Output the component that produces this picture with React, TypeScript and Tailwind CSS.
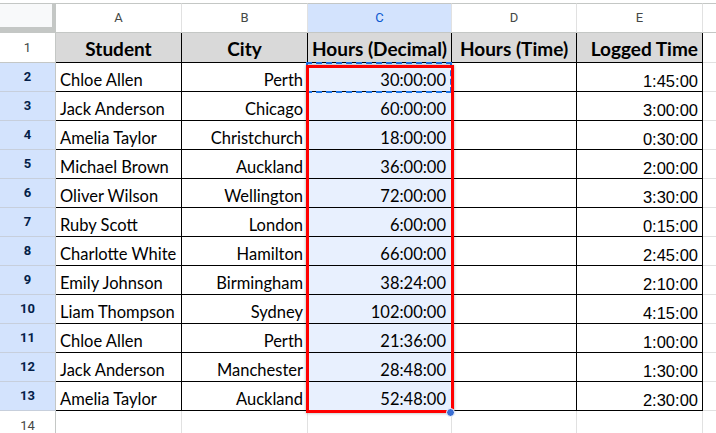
import React from 'react';

interface Entry {
    student: string;
    city: string;
    decimal: string;
    logged: string;
}

const entries: Entry[] = [
    { student: 'Chloe Allen', city: 'Perth', decimal: '30:00:00', logged: '1:45:00' },
    { student: 'Jack Anderson', city: 'Chicago', decimal: '60:00:00', logged: '3:00:00' },
    { student: 'Amelia Taylor', city: 'Christchurch', decimal: '18:00:00', logged: '0:30:00' },
    { student: 'Michael Brown', city: 'Auckland', decimal: '36:00:00', logged: '2:00:00' },
    { student: 'Oliver Wilson', city: 'Wellington', decimal: '72:00:00', logged: '3:30:00' },
    { student: 'Ruby Scott', city: 'London', decimal: '6:00:00', logged: '0:15:00' },
    { student: 'Charlotte White', city: 'Hamilton', decimal: '66:00:00', logged: '2:45:00' },
    { student: 'Emily Johnson', city: 'Birmingham', decimal: '38:24:00', logged: '2:10:00' },
    { student: 'Liam Thompson', city: 'Sydney', decimal: '102:00:00', logged: '4:15:00' },
    { student: 'Chloe Allen', city: 'Perth', decimal: '21:36:00', logged: '1:00:00' },
    { student: 'Jack Anderson', city: 'Manchester', decimal: '28:48:00', logged: '1:30:00' },
    { student: 'Amelia Taylor', city: 'Auckland', decimal: '52:48:00', logged: '2:30:00' },
];

const letters = ['A', 'B', 'C', 'D', 'E'];
const headers = [
    { label: 'Student', align: 'justify-center' },
    { label: 'City', align: 'justify-center' },
    { label: 'Hours (Decimal)', align: 'justify-center' },
    { label: 'Hours (Time)', align: 'justify-center' },
    { label: 'Logged Time', align: 'justify-end pr-[4px]' },
];

const cell = 'flex items-end border-r border-b border-black text-[16.5px] leading-none text-black whitespace-nowrap overflow-hidden';

export default function App() {
    return (
        <div className="relative w-[716px] h-[433px] overflow-hidden bg-white pt-[3px] font-[Lato,sans-serif]">
            <div className="grid grid-cols-[56px_126px_126px_144px_125px_126px_1fr] grid-rows-[30px_30px_repeat(13,29px)]">
                {/* Column letters */}
                <div className="bg-[#f8f9fa] border-t border-[#c4c7c5] border-r-[4px] border-b-[6px]" />
                {letters.map(l => (
                    <div
                        key={l}
                        className={`flex items-center justify-center border-t border-b border-r border-t-[#c4c7c5] border-b-[#c4c7c5] border-r-[#e1e1e1] font-[Roboto,sans-serif] text-[13px] ${l === 'C' ? 'bg-[#d3e3fd] text-[#0b57d0]' : 'text-[#444746]'}`}
                    >
                        {l}
                    </div>
                ))}
                <div className="border-t border-b border-[#c4c7c5]" />

                {/* Row 1: headers */}
                <div className="flex items-center justify-center border-r border-b border-[#c4c7c5] font-[Roboto,sans-serif] text-[13px] text-[#444746]">1</div>
                {headers.map(h => (
                    <div key={h.label} className={`${cell} ${h.align} bg-[#d9d9d9] pb-[4px] text-[19px] font-bold`}>
                        {h.label}
                    </div>
                ))}
                <div className="border-b border-[#e1e1e1]" />

                {/* Data rows */}
                {entries.map((e, i) => (
                    <React.Fragment key={i}>
                        <div className="flex items-center justify-center bg-[#d3e3fd] border-r border-b border-r-[#c4c7c5] border-b-[#c7cfdc] font-[Roboto,sans-serif] text-[13px] font-bold text-[#041e49]">
                            {i + 2}
                        </div>
                        <div className={`${cell} pl-[4px] pb-[3px]`}>{e.student}</div>
                        <div className={`${cell} justify-end pr-[4px] pb-[3px]`}>{e.city}</div>
                        <div className={`${cell} justify-end pr-[5px] pb-[3px] bg-[#e8f0fe]`}>{e.decimal}</div>
                        <div className={cell} />
                        <div className={`${cell} justify-end pr-[4px] pb-[2px] font-['Liberation_Sans',Arial,sans-serif]`}>{e.logged}</div>
                        <div className="border-b border-[#e1e1e1]" />
                    </React.Fragment>
                ))}

                {/* Row 14 */}
                <div className="flex items-center justify-center border-r border-[#c4c7c5] font-[Roboto,sans-serif] text-[13px] text-[#444746]">14</div>
                <div className="border-r border-[#e1e1e1]" />
                <div className="border-r border-[#e1e1e1]" />
                <div className="border-r border-[#e1e1e1]" />
                <div className="border-r border-[#e1e1e1]" />
                <div className="border-r border-[#e1e1e1]" />
                <div />
            </div>

            {/* Copy marquee around C2 */}
            <div className="absolute left-[306px] top-[62px] w-[146px] h-[31px] border-2 border-dashed border-[#1a73e8]" />
            {/* Red annotation box */}
            <div className="absolute left-[306px] top-[65px] w-[148px] h-[348px] border-[3px] border-[#ff0000] shadow-[0_0_3px_rgba(0,0,0,0.35)]" />
            {/* Fill handle */}
            <div className="absolute left-[446px] top-[408px] w-[9px] h-[9px] rounded-full bg-[#3b6fd4] border border-white" />
        </div>
    );
}
